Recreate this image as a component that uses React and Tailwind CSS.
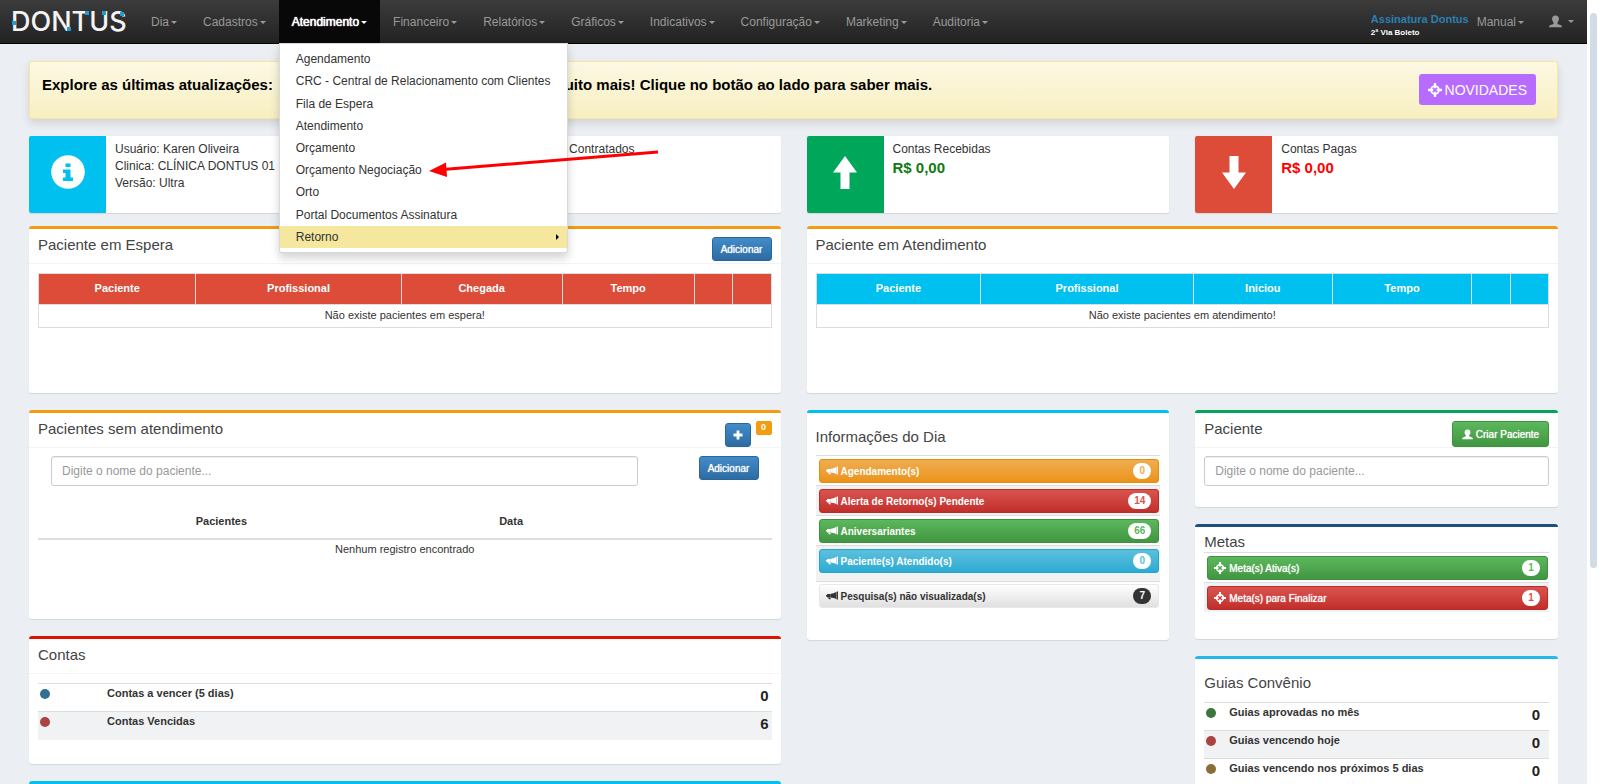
import React, { useState } from 'react';

const MENU = [
  'Dia',
  'Cadastros',
  'Atendimento',
  'Financeiro',
  'Relatórios',
  'Gráficos',
  'Indicativos',
  'Configuração',
  'Marketing',
  'Auditoria',
];

const ATENDIMENTO_ITEMS = [
  { label: 'Agendamento' },
  { label: 'CRC - Central de Relacionamento com Clientes' },
  { label: 'Fila de Espera' },
  { label: 'Atendimento' },
  { label: 'Orçamento' },
  { label: 'Orçamento Negociação' },
  { label: 'Orto' },
  { label: 'Portal Documentos Assinatura' },
  { label: 'Retorno', submenu: true },
];

const ESPERA_COLUMNS = [
  { label: 'Paciente', width: 'w-[21.5%]' },
  { label: 'Profissional', width: 'w-[28%]' },
  { label: 'Chegada', width: 'w-[22%]' },
  { label: 'Tempo', width: 'w-[18%]' },
  { label: '', width: 'w-[5.3%]' },
  { label: '', width: 'w-[5.2%]' },
];

const ATENDIMENTO_COLUMNS = [
  { label: 'Paciente', width: 'w-[22.5%]' },
  { label: 'Profissional', width: 'w-[29%]' },
  { label: 'Iniciou', width: 'w-[19%]' },
  { label: 'Tempo', width: 'w-[19%]' },
  { label: '', width: 'w-[5.3%]' },
  { label: '', width: 'w-[5.2%]' },
];

const BUTTON_COLORS = {
  blue: 'bg-linear-to-b from-[#428bca] to-[#2d6ca2] border-[#2b669a] text-white',
  green: 'bg-linear-to-b from-[#5cb85c] to-[#419641] border-[#3e8f3e] text-white',
  red: 'bg-linear-to-b from-[#d9534f] to-[#c12e2a] border-[#b92c28] text-white',
  orange: 'bg-linear-to-b from-[#f0ad4e] to-[#eb9316] border-[#e38d13] text-white',
  cyan: 'bg-linear-to-b from-[#5bc0de] to-[#2aabd2] border-[#28a4c9] text-white',
  plain: 'bg-linear-to-b from-white to-[#e0e0e0] border-[#e9e9e9] text-[#333]',
};

const BADGE_COLORS = {
  green: 'bg-white text-[#5cb85c]',
  red: 'bg-white text-[#d9534f]',
  orange: 'bg-white text-[#f0ad4e]',
  cyan: 'bg-white text-[#5bc0de]',
  plain: 'bg-[#333] text-white',
};

/* Icons */

const BullhornIcon = ({ className }) => (
  <svg viewBox="0 0 12 10" className={className} fill="currentColor" aria-hidden="true">
    <path d="M10.8 0.6h1.200v8h-1.200z" />
    <path d="M10.500 0.8v7.500C8.600 7.200 6.800 6.600 4.300 6.500V2.900C6.800 2.700 8.600 2 10.500 0.800z" />
    <path d="M4.300 2.900v3.600H1.300L0.900 5.500H0V3.900h0.900l0.400-1z" />
    <path d="M2.200 6.500h2l0.600 1.700H2.900z" />
  </svg>
);

const TargetIcon = ({ className }) => (
  <svg viewBox="0 0 16 16" className={className} fill="none" stroke="currentColor" aria-hidden="true">
    <circle cx="8" cy="8" r="4.5" strokeWidth="2" />
    <path d="M8 0v6M8 10v6M0 8h6M10 8h6" strokeWidth="2.6" />
  </svg>
);

const UserIcon = ({ className }) => (
  <svg viewBox="0 0 14 14" className={className} fill="currentColor" aria-hidden="true">
    <path d="M7 0.500c2.500 0 3.800 1.600 3.700 3.900-0.100 1.700-0.900 2.900-1.600 3.700v1.200c0.600 0.600 2.200 0.900 3.400 1.500 1.100 0.600 1.500 1.200 1.500 2.400H0c0-1.200 0.400-1.800 1.500-2.400 1.200-0.600 2.800-0.900 3.400-1.500V8.100C4.200 7.300 3.400 6.100 3.300 4.400 3.200 2.100 4.500 0.500 7 0.500z" />
  </svg>
);

const PlusIcon = ({ className }) => (
  <svg viewBox="0 0 10 10" className={className} fill="currentColor" aria-hidden="true">
    <path d="M3.600 0.500h2.800v3.100h3.100v2.800H6.400v3.100H3.600V6.400H0.500V3.600h3.100z" />
  </svg>
);

const InfoIcon = ({ className }) => (
  <svg viewBox="0 0 34 34" className={className} aria-hidden="true">
    <circle cx="17" cy="17" r="16.800" fill="#fff" />
    <path d="M14.500 8.500h5v3.500h-5zM12 14.500h7.500v8H22V26H12v-3.500h2.500V18H12z" fill="#00c0ef" />
  </svg>
);

const ArrowIcon = ({ className }) => (
  <svg viewBox="0 0 24 33" className={className} fill="#fff" aria-hidden="true">
    <path d="M12 0l12 16.500h-7.500V33h-9V16.500H0z" />
  </svg>
);

const Logo = () => (
  <svg viewBox="0 0 120 34" className="w-[120px] h-[34px]" role="img" aria-label="Dontus">
    <text
      x="0"
      y="26"
      fill="#f4f4f4"
      className="text-[27px] font-medium font-['Inter','Liberation_Sans',sans-serif]"
    >
      DONTUS
    </text>
    <g fill="#1f9cd8">
      <rect x="1" y="16" width="4" height="4" />
      <rect x="56" y="22" width="4" height="4" />
      <rect x="74" y="6" width="4" height="4" />
      <rect x="91" y="6" width="4" height="4" />
      <rect x="109" y="7" width="4" height="4" />
    </g>
  </svg>
);

const Caret = () => (
  <span className="inline-block ml-[2px] border-x-[3px] border-x-transparent border-t-[3px] border-t-current align-middle" />
);

/* Building blocks */

const SmallButton = ({ color, className = '', children, ...props }) => (
  <button
    type="button"
    className={`flex items-center justify-center gap-[3px] border rounded-[3px] text-[10px] [text-shadow:0_0_1px_currentColor] ${BUTTON_COLORS[color]} ${className}`}
    {...props}
  >
    {children}
  </button>
);

const Box = ({ border, className = '', children }) => (
  <section
    className={`bg-white border-t-[3px] rounded-[3px] shadow-[0_1px_1px_rgba(0,0,0,0.1)] ${border} ${className}`}
  >
    {children}
  </section>
);

const BoxHeader = ({ title, children }) => (
  <header className="flex items-start justify-between h-[35px] px-[9px] border-b border-[#f4f4f4]">
    <h3 className="mt-[6px] text-[15px] leading-5 text-[#444]">{title}</h3>
    {children}
  </header>
);

const InfoBox = ({ color, icon, children }) => (
  <div className="flex h-[77px] bg-white rounded-[2px] shadow-[0_1px_1px_rgba(0,0,0,0.1)]">
    <div className={`flex items-center justify-center w-[77px] pb-[5px] shrink-0 rounded-l-[2px] ${color}`}>
      {icon}
    </div>
    <div className="pl-[9px] pt-[5px] text-xs leading-[17px] text-[#333] whitespace-nowrap">{children}</div>
  </div>
);

const QueueTable = ({ columns, headClass, empty }) => (
  <table className="w-full table-fixed border-collapse border border-[#ddd] text-[11px] text-center text-[#333]">
    <thead>
      <tr className={`h-[31px] text-white ${headClass}`}>
        {columns.map((column, index) => (
          <th key={index} className={`pb-[2px] border border-[#ddd] font-bold ${column.width}`}>
            {column.label}
          </th>
        ))}
      </tr>
    </thead>
    <tbody>
      <tr className="h-[23px]">
        <td colSpan={columns.length} className="pb-[2px]">
          {empty}
        </td>
      </tr>
    </tbody>
  </table>
);

const CountButton = ({ color, icon, label, count, bold }) => (
  <button
    type="button"
    className={`flex items-center w-full h-6 pl-[6px] pr-[7px] border rounded-[3px] text-[10px] ${
      bold ? 'font-bold' : '[text-shadow:0_0_1px_currentColor]'
    } ${BUTTON_COLORS[color]}`}
  >
    {icon}
    <span className="ml-[3px] [text-shadow:inherit]">{label}</span>
    <span
      className={`ml-auto min-w-[18px] h-4 px-[6px] rounded-full text-[10px] leading-4 font-bold text-center [text-shadow:none] ${BADGE_COLORS[color]}`}
    >
      {count}
    </span>
  </button>
);

const StatusRow = ({ dot, label, value, dotCell, valueCell, striped }) => (
  <tr className={`h-7 border-t border-[#ddd] ${striped ? 'bg-[#f1f2f4]' : ''}`}>
    <td className={`align-top pt-1 ${dotCell}`}>
      <span className={`block mt-px size-[10px] rounded-full ${dot}`} />
    </td>
    <td className="align-top pt-px text-[11px] leading-4 font-bold text-[#333]">{label}</td>
    <td className={`align-top pt-[2px] text-right text-[15px] leading-5 font-bold text-[#222] ${valueCell}`}>
      {value}
    </td>
  </tr>
);

/* Top bar */

const Navbar = () => {
  const [open, setOpen] = useState('Atendimento');

  return (
    <nav className="relative z-20 flex items-stretch h-11 bg-linear-to-b from-[#3c3c3c] to-[#222] border-b border-black text-xs text-[#999]">
      <a href="#" className="flex items-center w-[138px] pl-[11px] shrink-0">
        <Logo />
      </a>
      <ul className="flex">
        {MENU.map((name) => {
          const isOpen = open === name;
          return (
            <li key={name} className="relative flex">
              <button
                type="button"
                onClick={() => setOpen(isOpen ? null : name)}
                className={`px-[13px] whitespace-nowrap ${
                  isOpen ? 'bg-[#080808] text-white [text-shadow:0_0_1px_#fff,0_0_1px_#fff]' : ''
                }`}
              >
                {name}
                <Caret />
              </button>
              {isOpen && name === 'Atendimento' && (
                <ul className="absolute left-0 top-full flex flex-col w-[289px] h-[210px] py-1 bg-white border border-black/15 rounded-b-[3px] shadow-[0_5px_10px_rgba(0,0,0,0.18)] text-[#333]">
                  {ATENDIMENTO_ITEMS.map((item) => (
                    <li key={item.label} className="flex-1">
                      <a
                        href="#"
                        className={`flex items-center justify-between h-full pl-4 pr-2 whitespace-nowrap ${
                          item.submenu ? 'bg-[#f5e79e]' : ''
                        }`}
                      >
                        {item.label}
                        {item.submenu && (
                          <span className="border-y-[3px] border-y-transparent border-l-[3px] border-l-black" />
                        )}
                      </a>
                    </li>
                  ))}
                </ul>
              )}
            </li>
          );
        })}
      </ul>
      <div className="flex items-center ml-auto pr-[13px]">
        <div className="flex flex-col pt-[7px]">
          <a href="#" className="text-[11px] leading-4 font-bold text-[#2a7fb5]">
            Assinatura Dontus
          </a>
          <a href="#" className="text-[8px] leading-3 text-white font-bold">
            2ª Via Boleto
          </a>
        </div>
        <button type="button" className="ml-2">
          Manual
          <Caret />
        </button>
        <button type="button" aria-label="Usuário" className="flex items-center gap-1 ml-[25px]">
          <UserIcon className="w-[13px] h-[13px]" />
          <Caret />
        </button>
      </div>
    </nav>
  );
};

// Red pointer over the "Orçamento Negociação" menu item
const Pointer = () => (
  <svg
    viewBox="0 0 230 30"
    className="absolute left-[429px] top-[148px] z-30 w-[230px] h-[30px] pointer-events-none"
    aria-hidden="true"
  >
    <path d="M14 21.500L229 4" stroke="#ff0000" strokeWidth="3" />
    <path d="M0 23L17 14.500L18 29z" fill="#ff0000" />
  </svg>
);

/* Panels */

const PacientesSemAtendimento = () => (
  <Box border="border-[#f39c12]" className="h-[209px]">
    <BoxHeader title="Pacientes sem atendimento">
      <div className="flex items-start gap-[5px] pt-2">
        <SmallButton color="blue" className="mt-[2px] w-[26px] h-6" aria-label="Novo">
          <PlusIcon className="w-[10px] h-[10px]" />
        </SmallButton>
        <span className="w-4 h-[14px] rounded-[2px] bg-[#f39c12] text-[9px] leading-[13px] font-bold text-white text-center">
          0
        </span>
      </div>
    </BoxHeader>
    <div className="flex items-start justify-between pt-2 px-[22px]">
      <input
        type="text"
        aria-label="Nome do paciente"
        placeholder="Digite o nome do paciente..."
        className="w-[83%] h-[30px] px-[10px] border border-[#ccc] rounded-[3px] shadow-[inset_0_1px_1px_rgba(0,0,0,0.075)] text-xs placeholder:text-[#999]"
      />
      <SmallButton color="blue" className="w-[60px] h-6">
        Adicionar
      </SmallButton>
    </div>
    <div className="px-[9px] pt-[19px]">
      <table className="w-full table-fixed border-collapse text-[11px] text-center text-[#333]">
        <thead>
          <tr className="h-[34px] border-b-2 border-[#ddd]">
            <th className="w-[50%]">Pacientes</th>
            <th className="w-[29%]">Data</th>
            <th className="w-[21%]"></th>
          </tr>
        </thead>
        <tbody>
          <tr className="h-[22px]">
            <td colSpan={3} className="pb-[2px]">
              Nenhum registro encontrado
            </td>
          </tr>
        </tbody>
      </table>
    </div>
  </Box>
);

const InformacoesDoDia = () => {
  const rows = [
    { color: 'orange', label: 'Agendamento(s)', count: 0 },
    { color: 'red', label: 'Alerta de Retorno(s) Pendente', count: 14 },
    { color: 'green', label: 'Aniversariantes', count: 66 },
    { color: 'cyan', label: 'Paciente(s) Atendido(s)', count: 0 },
  ];

  return (
    <Box border="border-[#00c0ef]" className="h-[230px] px-[9px]">
      <h3 className="pt-[14px] pb-2 text-[15px] leading-5 text-[#444]">Informações do Dia</h3>
      <ul>
        {rows.map((row) => (
          <li
            key={row.label}
            className="pl-[3px] pr-px pt-[3px] pb-[2px] border-t border-[#ddd] even:bg-[#f1f2f4] last:pb-2"
          >
            <CountButton bold icon={<BullhornIcon className="w-3 h-[10px]" />} {...row} />
          </li>
        ))}
      </ul>
      <div className="pl-[3px] pr-px pt-[2px] border-t border-[#ddd]">
        <CountButton
          bold
          color="plain"
          icon={<BullhornIcon className="w-3 h-[10px]" />}
          label="Pesquisa(s) não visualizada(s)"
          count={7}
        />
      </div>
    </Box>
  );
};

const PacientePanel = () => (
  <Box border="border-[#00a65a]" className="h-[97px]">
    <BoxHeader title="Paciente">
      <SmallButton color="green" className="mt-2 h-[26px] w-[97px]">
        <UserIcon className="w-[11px] h-[11px]" />
        Criar Paciente
      </SmallButton>
    </BoxHeader>
    <div className="px-[9px] pt-2">
      <input
        type="text"
        aria-label="Buscar paciente"
        placeholder="Digite o nome do paciente..."
        className="w-full h-[30px] px-[10px] border border-[#ccc] rounded-[3px] shadow-[inset_0_1px_1px_rgba(0,0,0,0.075)] text-xs placeholder:text-[#999]"
      />
    </div>
  </Box>
);

const MetasPanel = () => (
  <Box border="border-[#1d4f84]" className="h-[115px] px-[9px]">
    <h3 className="pt-[5px] text-[15px] leading-5 text-[#444]">Metas</h3>
    <ul>
      <li className="pl-[3px] pr-px pt-[3px] pb-[2px] border-t border-[#ddd]">
        <CountButton color="green" icon={<TargetIcon className="w-3 h-3" />} label="Meta(s) Ativa(s)" count={1} />
      </li>
      <li className="pl-[3px] pr-px pt-[3px] pb-[2px] border-t border-[#ddd] bg-[#f1f2f4]">
        <CountButton color="red" icon={<TargetIcon className="w-3 h-3" />} label="Meta(s) para Finalizar" count={1} />
      </li>
    </ul>
  </Box>
);

const GUIAS = [
  { dot: 'bg-[#3c763d]', label: 'Guias aprovadas no mês', value: 0 },
  { dot: 'bg-[#a94442]', label: 'Guias vencendo hoje', value: 0, striped: true },
  { dot: 'bg-[#8a6d3b]', label: 'Guias vencendo nos próximos 5 dias', value: 0 },
];

const GuiasPanel = () => (
  <Box border="border-[#27b8ea]" className="px-[9px] pb-6">
    <h3 className="pt-[14px] pb-[9px] text-[15px] leading-5 text-[#444]">Guias Convênio</h3>
    <table className="w-full border-collapse">
      <tbody>
        {GUIAS.map((guia) => (
          <StatusRow key={guia.label} dotCell="w-[25px] pl-[2px]" valueCell="pr-[9px]" {...guia} />
        ))}
      </tbody>
    </table>
  </Box>
);

const CONTAS = [
  { dot: 'bg-[#31708f]', label: 'Contas a vencer (5 dias)', value: 0 },
  { dot: 'bg-[#a94442]', label: 'Contas Vencidas', value: 6, striped: true },
];

const App = () => (
  <div className="flex h-screen overflow-hidden bg-white font-['Liberation_Sans',Arial,sans-serif]">
    <div className="relative flex-1 min-w-0 overflow-hidden bg-[#ebeef3]">
      <Navbar />
      <Pointer />

      <main className="px-[29px] pt-[17px]">
        <div className="flex items-start justify-between h-[58px] pl-3 pr-[21px] bg-linear-to-b from-[#fcf8e3] to-[#f8efc0] border border-[#f5e79e] rounded-[3px] shadow-[0_4px_8px_rgba(0,0,0,0.12)]">
          <p className="flex gap-[10px] mt-[13px] text-[15px] leading-5 font-bold text-black whitespace-nowrap">
            <span>Explore as últimas atualizações:</span>
            <span>
              telas, relatórios, agenda, financeiro e muito mais! Clique no botão ao lado para saber mais.
            </span>
          </p>
          <button
            type="button"
            className="flex items-center gap-[3px] h-[31px] mt-3 px-[9px] rounded-[3px] bg-[#b76cff] text-sm text-white"
          >
            <TargetIcon className="w-[14px] h-[14px]" />
            NOVIDADES
          </button>
        </div>

        <div className="grid grid-cols-4 gap-x-[26px] mt-[17px]">
          <InfoBox color="bg-[#00c0ef]" icon={<InfoIcon className="w-[34px] h-[34px]" />}>
            <p>Usuário: Karen Oliveira</p>
            <p>Clinica: CLÍNICA DONTUS 01</p>
            <p>Versão: Ultra</p>
          </InfoBox>
          <InfoBox color="bg-[#f39c12]" icon={<ArrowIcon className="w-6 h-[33px]" />}>
            <p className="flex gap-[6px]">
              <span>Orçamento</span>
              <span>Contratados</span>
            </p>
          </InfoBox>
          <InfoBox color="bg-[#00a65a]" icon={<ArrowIcon className="w-6 h-[33px]" />}>
            <p>Contas Recebidas</p>
            <p className="mt-px text-[15px] font-bold text-[#117a11]">R$ 0,00</p>
          </InfoBox>
          <InfoBox color="bg-[#dd4b39]" icon={<ArrowIcon className="w-6 h-[33px] rotate-180" />}>
            <p>Contas Pagas</p>
            <p className="mt-px text-[15px] font-bold text-[#ff0000]">R$ 0,00</p>
          </InfoBox>
        </div>

        <div className="grid grid-cols-2 items-start gap-x-[26px] mt-[13px]">
          <div className="flex flex-col gap-[17px]">
            <Box border="border-[#f39c12]" className="h-[167px]">
              <BoxHeader title="Paciente em Espera">
                <SmallButton color="blue" className="mt-2 w-[60px] h-6">
                  Adicionar
                </SmallButton>
              </BoxHeader>
              <div className="px-[9px] pt-[9px]">
                <QueueTable columns={ESPERA_COLUMNS} headClass="bg-[#dd4b39]" empty="Não existe pacientes em espera!" />
              </div>
            </Box>

            <PacientesSemAtendimento />

            <Box border="border-[#dd1100]" className="h-[128px]">
              <BoxHeader title="Contas" />
              <div className="px-[9px] pt-[9px]">
                <table className="w-full border-collapse">
                  <tbody>
                    {CONTAS.map((conta) => (
                      <StatusRow key={conta.label} dotCell="w-[69px] pl-[2px]" valueCell="pr-[3px]" {...conta} />
                    ))}
                  </tbody>
                </table>
              </div>
            </Box>

            <Box border="border-[#00c0ef]" className="h-[128px]" />
          </div>

          <div className="flex flex-col gap-[17px]">
            <Box border="border-[#f39c12]" className="h-[167px]">
              <BoxHeader title="Paciente em Atendimento" />
              <div className="px-[9px] pt-[9px]">
                <QueueTable
                  columns={ATENDIMENTO_COLUMNS}
                  headClass="bg-[#00c0ef]"
                  empty="Não existe pacientes em atendimento!"
                />
              </div>
            </Box>

            <div className="grid grid-cols-2 items-start gap-x-[26px]">
              <InformacoesDoDia />
              <div className="flex flex-col gap-[17px]">
                <PacientePanel />
                <MetasPanel />
                <GuiasPanel />
              </div>
            </div>
          </div>
        </div>
      </main>
    </div>

    {/* Scroll track */}
    <div className="w-[13px] shrink-0 pt-[13px] pl-[3px]">
      <div className="w-[7px] h-[72%] rounded-full bg-[#d2dce6]" />
    </div>
  </div>
);

export default App;
